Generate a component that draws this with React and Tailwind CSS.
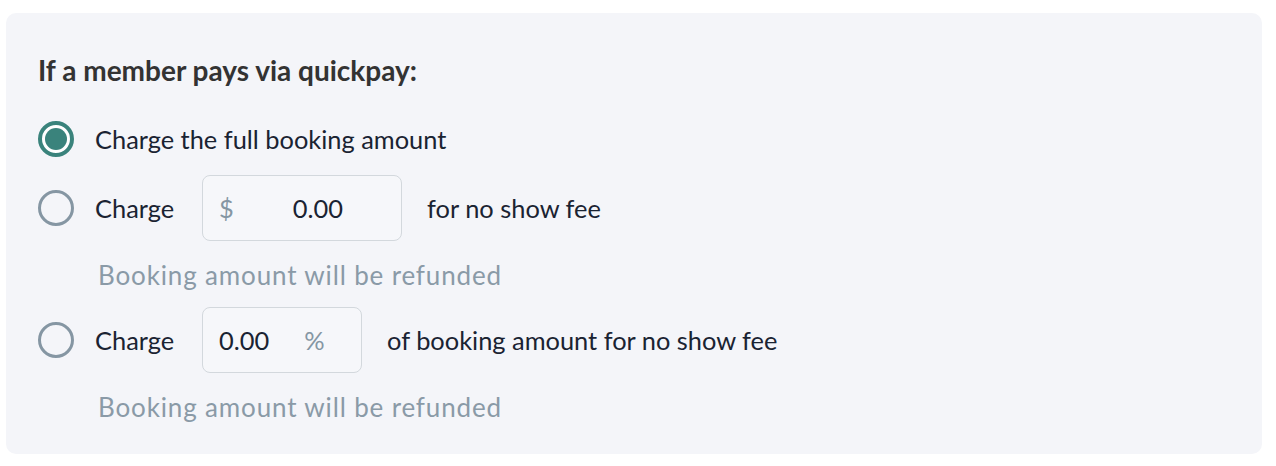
function Radio({ checked }) {
  if (checked) {
    return (
      <span className="flex h-[36px] w-[36px] shrink-0 items-center justify-center rounded-full border-[4px] border-[#3a837c] bg-white">
        <span className="h-[22px] w-[22px] rounded-full bg-[#3a837c]" />
      </span>
    );
  }
  return <span className="h-[36px] w-[36px] shrink-0 rounded-full border-[3px] border-[#8596a3]" />;
}

export default function App() {
  return (
    <div className="min-h-[466px] bg-white pt-[13px] pl-[6px] font-['Lato','Liberation_Sans',sans-serif]">
      <div className="w-[1256px] h-[441px] rounded-[10px] bg-[#f4f5f9] pl-[32px] pt-[42px]">
        <h3 className="text-[28px] leading-[30px] font-bold text-[#333]">If a member pays via quickpay:</h3>

        <div className="mt-[36px] flex h-[36px] items-center gap-[21px] text-[25.4px] text-[#1a2332]">
          <Radio checked />
          <span>Charge the full booking amount</span>
        </div>

        <div className="mt-[18px] flex h-[66px] items-center text-[25.4px] text-[#1a2332]">
          <Radio />
          <span className="ml-[21px]">Charge</span>
          <div className="ml-[28px] flex h-[66px] w-[200px] items-center rounded-[8px] border border-[#d3d8dd] bg-[#f6f7fa] px-[16px]">
            <span className="text-[#8596a3]">$</span>
            <span className="ml-[59px]">0.00</span>
          </div>
          <span className="ml-[25px]">for no show fee</span>
        </div>
        <p className="mt-[19px] pl-[60px] text-[26px] leading-[30px] tracking-[0.85px] text-[#8a9aa7]">Booking amount will be refunded</p>

        <div className="mt-[17px] flex h-[66px] items-center text-[25.4px] text-[#1a2332]">
          <Radio />
          <span className="ml-[21px]">Charge</span>
          <div className="ml-[28px] flex h-[66px] w-[160px] items-center rounded-[8px] border border-[#d3d8dd] bg-[#f6f7fa] px-[16px]">
            <span>0.00</span>
            <span className="ml-[35px] text-[#8596a3]">%</span>
          </div>
          <span className="ml-[25px]">of booking amount for no show fee</span>
        </div>
        <p className="mt-[19px] pl-[60px] text-[26px] leading-[30px] tracking-[0.85px] text-[#8a9aa7]">Booking amount will be refunded</p>
      </div>
    </div>
  );
}
